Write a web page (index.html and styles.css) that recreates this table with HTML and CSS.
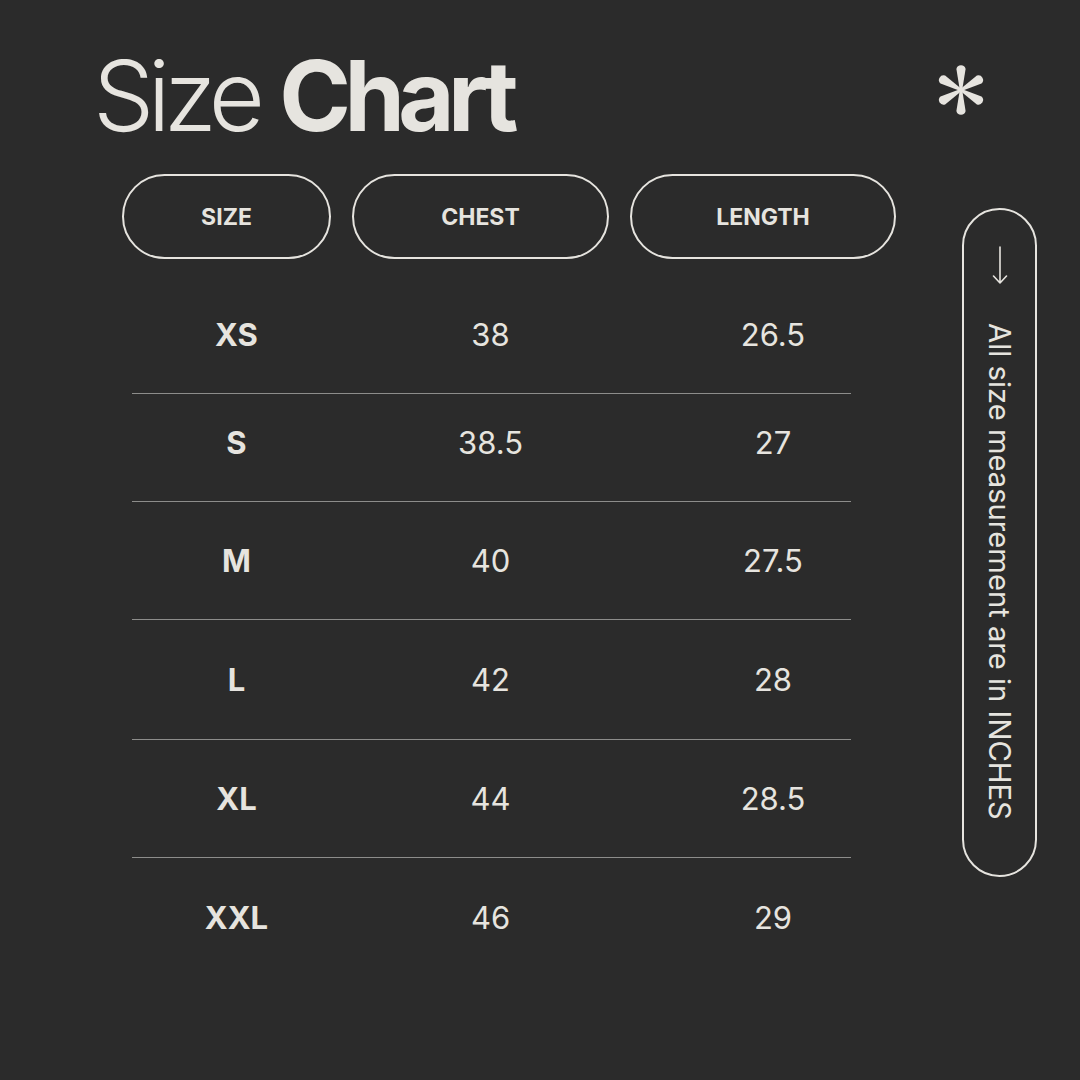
FILE: index.html
```html
<!DOCTYPE html>
<html lang="en">
<head>
<meta charset="utf-8">
<title>Size Chart</title>
<link rel="stylesheet" href="styles.css">
</head>
<body>
<div class="page">
  <div class="main">
    <h1 class="title"><span class="light">Size</span> <span class="bold">Chart</span></h1>
    <div class="head">
      <div class="pill">SIZE</div>
      <div class="pill">CHEST</div>
      <div class="pill">LENGTH</div>
    </div>
    <div class="rows">
      <div class="row"><div class="cells"><span class="sz">XS</span><span>38</span><span>26.5</span></div></div>
      <div class="row row-short"><div class="cells"><span class="sz">S</span><span>38.5</span><span>27</span></div></div>
      <div class="row"><div class="cells"><span class="sz">M</span><span>40</span><span>27.5</span></div></div>
      <div class="row row-tall"><div class="cells"><span class="sz">L</span><span>42</span><span>28</span></div></div>
      <div class="row"><div class="cells"><span class="sz">XL</span><span>44</span><span>28.5</span></div></div>
      <div class="row row-last"><div class="cells"><span class="sz">XXL</span><span>46</span><span>29</span></div></div>
    </div>
  </div>
  <div class="side">
    <svg class="star" width="52" height="54" viewBox="-26 -27 52 54" aria-hidden="true">
      <g fill="#e6e4df">
        <path id="spoke" d="M-1.2 0 L-4.6 -21 A4.7 4.7 0 0 1 4.6 -21 L1.2 0 Z"/>
        <use href="#spoke" transform="rotate(60)"/>
        <use href="#spoke" transform="rotate(120)"/>
        <use href="#spoke" transform="rotate(180)"/>
        <use href="#spoke" transform="rotate(240)"/>
        <use href="#spoke" transform="rotate(300)"/>
      </g>
    </svg>
    <div class="note">
      <svg class="arrow" width="16" height="40" viewBox="0 0 16 40" aria-hidden="true">
        <path d="M8 1 V37 M1.5 30 L8 37 L14.5 30" fill="none" stroke="#e6e4df" stroke-width="1.6" stroke-linecap="round" stroke-linejoin="round"/>
      </svg>
      <span class="note-text">All size measurement are in INCHES</span>
    </div>
  </div>
</div>
</body>
</html>
```

FILE: styles.css
```css
html, body {
  margin: 0;
  padding: 0;
  background: #2b2b2b;
}
body {
  width: 1080px;
  height: 1080px;
  overflow: hidden;
  font-family: Inter, "Noto Sans", "Liberation Sans", sans-serif;
  color: #e6e4df;
}
.page {
  display: flex;
  width: 1080px;
  height: 1080px;
}
.main {
  width: 936px;
  padding-left: 93px;
  box-sizing: border-box;
}
.title {
  margin: 46px 0 0 0;
  font-size: 97px;
  line-height: 100px;
  font-weight: 400;
  letter-spacing: -6.5px;
  word-spacing: 0;
  white-space: nowrap;
}
.title .light { font-weight: 300; }
.title .bold { font-weight: 700; }
.head {
  margin: 28px 0 0 29px;
  display: grid;
  grid-template-columns: 209px 257px 266px;
  column-gap: 21px;
}
.pill {
  height: 85px;
  box-sizing: border-box;
  border: 2px solid #e6e4df;
  border-radius: 43px;
  display: flex;
  align-items: center;
  justify-content: center;
  font-size: 23px;
  font-weight: 700;
}
.rows {
  margin: 17px 0 0 39px;
}
.row {
  width: 719px;
  height: 118px;
  box-sizing: border-box;
  border-bottom: 1.5px solid #8d8d8b;
}
.row-short { height: 108px; padding-bottom: 10px; }
.row-tall { height: 120px; }
.row-last { border-bottom: none; }
.cells {
  height: 100%;
  display: grid;
  grid-template-columns: 209px 257px 266px;
  column-gap: 21px;
  align-items: center;
  justify-items: center;
  font-size: 31px;
  font-weight: 400;
}
.cells .sz { font-weight: 700; }
.side {
  display: flex;
  flex-direction: column;
  align-items: flex-start;
}
.star {
  display: block;
  margin: 63px 0 0 -1px;
}
.note {
  margin: 91px 0 0 26px;
  width: 75px;
  height: 669px;
  box-sizing: border-box;
  border: 2px solid #e6e4df;
  border-radius: 38px;
  display: flex;
  flex-direction: column;
  align-items: center;
  padding-top: 36px;
}
.arrow { display: block; margin-left: 1px; }
.note-text {
  margin-top: 37px;
  writing-mode: vertical-rl;
  font-size: 29.2px;
  font-weight: 400;
  line-height: 1;
  white-space: nowrap;
}
```
